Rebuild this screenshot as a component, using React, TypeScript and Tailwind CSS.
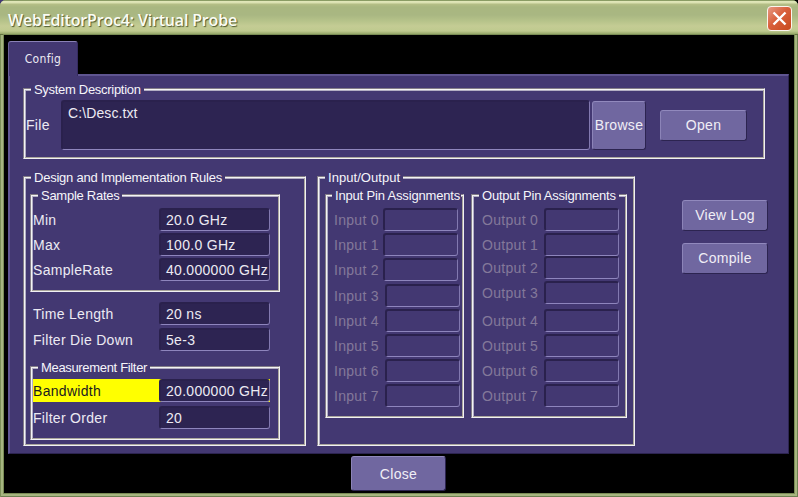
import type { ReactNode } from 'react';

function Group({
  title,
  className,
  legendClass,
  children,
}: {
  title: string;
  className: string;
  legendClass: string;
  children: ReactNode;
}) {
  return (
    <section
      className={`shrink-0 border border-t-[#837d88] border-l-[#837d88] border-r-[#f2f1f4] border-b-[#f2f1f4] shadow-[inset_1px_1px_0_#f4f4f4,inset_-1px_-1px_0_#aaa69c,inset_2px_2px_0_#b3aec4] ${className}`}
    >
      <h2
        className={`-mt-[8px] h-[18px] w-fit bg-[#433872] text-[13px] leading-[18px] whitespace-nowrap text-[#f6f5fa] ${legendClass}`}
      >
        {title}
      </h2>
      {children}
    </section>
  );
}

const sunken =
  'shrink-0 rounded-[3px] border-t-2 border-l-2 border-r border-b border-t-[#2a214d] border-l-[#2a214d] border-r-[#8279b0] border-b-[#8e85bd]';

function Row({
  label,
  value,
  className = '',
  highlight = false,
}: {
  label: string;
  value: string;
  className?: string;
  highlight?: boolean;
}) {
  return (
    <div
      className={`flex h-[23px] w-[237px] items-center ${highlight ? 'bg-[#ffff00] text-[#1a1a20]' : ''} ${className}`}
    >
      <span className="w-[126px] shrink-0 leading-[22px]">{label}</span>
      <div
        className={`h-[23px] w-[111px] overflow-hidden bg-[#2d2452] pl-[5px] leading-[20px] whitespace-nowrap text-[#eceaf2] ${sunken}`}
      >
        {value}
      </div>
    </div>
  );
}

function Pin({
  label,
  labelClass,
  className,
}: {
  label: string;
  labelClass: string;
  className: string;
}) {
  return (
    <div className={`flex h-[23px] items-center text-[#83799a] ${className}`}>
      <span className={`shrink-0 leading-[22px] whitespace-nowrap ${labelClass}`}>{label}</span>
      <div className={`h-[23px] w-[75px] ${sunken}`} />
    </div>
  );
}

function Button({ children, className }: { children: ReactNode; className: string }) {
  return (
    <button
      className={`flex shrink-0 items-center justify-center rounded-[3px] border border-t-[#9189bd] border-l-[#8c84b8] border-r-[#2c2450] border-b-[#2c2450] bg-[#7067a0] whitespace-nowrap text-[#f0eef6] ${className}`}
    >
      {children}
    </button>
  );
}

const inputPins = [
  ['mt-[3px]', 'w-[49px]'],
  ['mt-[2px]', 'w-[49px]'],
  ['mt-[2px]', 'w-[49px]'],
  ['mt-[3px]', 'w-[51px]'],
  ['mt-[2px]', 'w-[51px]'],
  ['mt-[2px]', 'w-[51px]'],
  ['mt-[2px]', 'w-[51px]'],
  ['mt-[2px]', 'w-[51px]'],
];

const outputPins = [
  'mt-[3px]',
  'mt-[2px]',
  'mt-0',
  'mt-[2px]',
  'mt-[5px]',
  'mt-[2px]',
  'mt-[2px]',
  'mt-[2px]',
];

export default function App() {
  return (
    <div className="h-[497px] w-[798px] overflow-hidden bg-[linear-gradient(90deg,#433872_50%,#000_50%)] font-['Liberation_Sans',Arial,sans-serif] text-[14px] tracking-[0.3px] text-[#eceaf2]">
      <div className="flex h-full w-full flex-col overflow-hidden rounded-t-[6px] bg-[#a6b580] shadow-[inset_1px_0_0_#7d9058,inset_-1px_-1px_0_#6d8052]">
        <header className="flex h-[35px] shrink-0 items-center justify-between border-b border-b-[#62733f] bg-[linear-gradient(180deg,#8a9c64_0px,#8a9c64_1px,#e2e8ba_1px,#d9e0b0_3px,#b5bf86_4px,#a9b780_7px,#a9b782_15px,#b6c38a_21px,#c4cc94_26px,#bfca8f_31px,#95a768_34px)] pr-[6px] pl-[8px]">
          <h1 className="pt-[6px] font-['Open_Sans',sans-serif] text-[16px] leading-[28px] font-semibold tracking-[-0.18px] whitespace-nowrap text-[#fbfcf4] [text-shadow:1px_1px_1px_#4e5a30]">
            WebEditorProc4: Virtual Probe
          </h1>
          <button className="mt-[2px] flex h-[25px] w-[25px] items-center justify-center rounded-[4px] border-[1.5px] border-[#fbf5ee] bg-[linear-gradient(135deg,#e79a84_0%,#d9603c_45%,#c84a1c_100%)]">
            <svg width="15" height="15" viewBox="0 0 15 15" stroke="#fff" strokeWidth="2.4">
              <path d="M1.5 1.5 13.5 13.5M13.5 1.5 1.5 13.5" />
            </svg>
          </button>
        </header>

        <div className="mx-[4px] mb-[4px] flex min-h-0 flex-1 flex-col bg-black shadow-[0_0_0_1px_#7a8c55]">
          <div className="flex h-[39px] shrink-0 items-end pl-[4px]">
            <div className="relative -mb-[2px] flex h-[35px] w-[70px] items-center justify-center rounded-t-[3px] border-t border-l border-r border-t-[#8a81b6] border-l-[#6b6199] border-r-[#352b60] bg-[#433872] font-['DejaVu_Sans_Condensed','DejaVu_Sans',sans-serif] text-[12px] tracking-[0.3px]">
              Config
            </div>
          </div>

          <main className="mr-[5px] ml-[4px] h-[380px] shrink-0 border-t-2 border-r border-b border-l-2 border-t-[#5f5590] border-l-[#625894] border-r-[#2c2450] border-b-[#2c2450] bg-[#433872]">
            <Group
              title="System Description"
              className="mt-[12px] ml-[13px] h-[71px] w-[742px]"
              legendClass="ml-[7px] px-[3px] tracking-[-0.3px]"
            >
              <div className="flex h-[51px] items-center pt-px pl-[2px]">
                <span className="w-[35px] shrink-0">File</span>
                <div
                  className={`h-[50px] w-[529px] bg-[#2d2452] pl-[5px] leading-[22px] tracking-[0.1px] ${sunken}`}
                >
                  C:\Desc.txt
                </div>
                <Button className="ml-[2px] h-[49px] w-[54px]">Browse</Button>
                <Button className="ml-[14px] h-[31px] w-[87px]">Open</Button>
              </div>
            </Group>

            <div className="mt-[17px] ml-[13px] flex">
              <Group
                title="Design and Implementation Rules"
                className="h-[270px] w-[283px]"
                legendClass="ml-[7px] px-[3px] tracking-[-0.23px]"
              >
                <Group
                  title="Sample Rates"
                  className="mt-[7px] ml-[6px] h-[98px] w-[250px]"
                  legendClass="ml-[7px] px-[3px] tracking-[-0.27px]"
                >
                  <div className="pt-[3px] pl-[2px]">
                    <Row label="Min" value="20.0 GHz" />
                    <Row label="Max" value="100.0 GHz" className="mt-[2px]" />
                    <Row label="SampleRate" value="40.000000 GHz" className="mt-[2px]" />
                  </div>
                </Group>
                <div className="pl-[9px]">
                  <Row label="Time Length" value="20 ns" className="mt-[10px]" />
                  <Row label="Filter Die Down" value="5e-3" className="mt-[3px]" />
                </div>
                <Group
                  title="Measurement Filter"
                  className="mt-[15px] ml-[6px] h-[74px] w-[250px]"
                  legendClass="ml-[7px] px-[3px] tracking-[-0.33px]"
                >
                  <div className="pt-[2px] pl-[2px]">
                    <Row label="Bandwidth" value="20.000000 GHz" highlight />
                    <Row label="Filter Order" value="20" className="mt-[4px]" />
                  </div>
                </Group>
              </Group>

              <Group
                title="Input/Output"
                className="ml-[11px] h-[270px] w-[318px]"
                legendClass="ml-[7px] px-[3px] tracking-[0.05px]"
              >
                <div className="mt-[7px] flex pl-[7px]">
                  <Group
                    title="Input Pin Assignments"
                    className="h-[224px] w-[139px]"
                    legendClass="ml-[6px] pr-[1px] pl-[3px] tracking-[-0.17px]"
                  >
                    {inputPins.map(([gap, width], i) => (
                      <Pin
                        key={i}
                        label={`Input ${i}`}
                        labelClass={width}
                        className={`pl-[8px] ${gap}`}
                      />
                    ))}
                  </Group>
                  <Group
                    title="Output Pin Assignments"
                    className="ml-[7px] h-[224px] w-[156px]"
                    legendClass="ml-[7px] px-[3px] tracking-[-0.23px]"
                  >
                    {outputPins.map((gap, i) => (
                      <Pin
                        key={i}
                        label={`Output ${i}`}
                        labelClass="w-[62px]"
                        className={`pl-[10px] ${gap}`}
                      />
                    ))}
                  </Group>
                </div>
              </Group>

              <div className="ml-[47px] flex flex-col gap-[12px] pt-[24px]">
                <Button className="h-[31px] w-[86px]">View Log</Button>
                <Button className="h-[31px] w-[86px]">Compile</Button>
              </div>
            </div>
          </main>

          <footer className="flex pt-[2px] pl-[347px]">
            <Button className="h-[35px] w-[95px] pt-px">Close</Button>
          </footer>
        </div>
      </div>
    </div>
  );
}
